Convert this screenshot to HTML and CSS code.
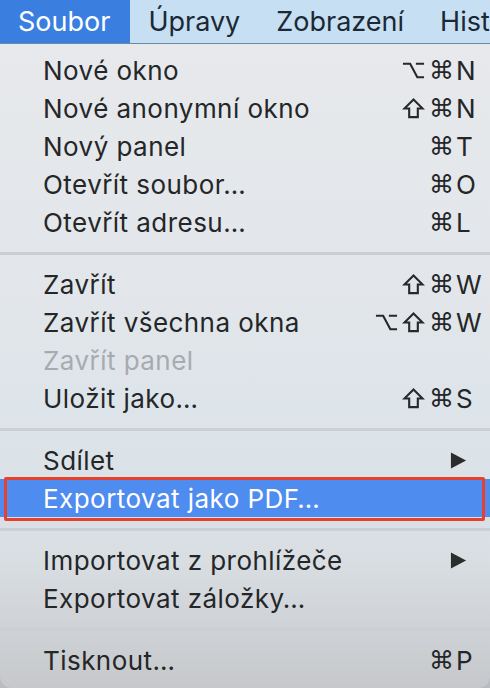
FILE: index.html
```html
<!DOCTYPE html>
<html lang="cs">
<head>
<meta charset="utf-8">
<link rel="stylesheet" href="styles.css">
</head>
<body>
<div class="screen">
  <div class="menubar">
    <div class="mb-item active">Soubor</div>
    <div class="mb-item">Úpravy</div>
    <div class="mb-item">Zobrazení</div>
    <div class="mb-item">Hist</div>
  </div>
  <div class="menu">
    <div class="row"><span class="label">Nové okno</span><span class="sc"><span class="mods"><svg class="ic" viewBox="0 0 24 24"><path d="M1 5H8.5L16 19H23M14.5 5H23"/></svg><span class="cmd">⌘</span></span><span class="key">N</span></span></div>
    <div class="row"><span class="label">Nové anonymní okno</span><span class="sc"><span class="mods"><svg class="ic" viewBox="0 0 24 24"><path d="M12 2.5L21.5 12H16.5V21H7.5V12H2.5Z"/></svg><span class="cmd">⌘</span></span><span class="key">N</span></span></div>
    <div class="row"><span class="label">Nový panel</span><span class="sc"><span class="mods"><span class="cmd">⌘</span></span><span class="key">T</span></span></div>
    <div class="row"><span class="label">Otevřít soubor…</span><span class="sc"><span class="mods"><span class="cmd">⌘</span></span><span class="key">O</span></span></div>
    <div class="row"><span class="label">Otevřít adresu…</span><span class="sc"><span class="mods"><span class="cmd">⌘</span></span><span class="key">L</span></span></div>
    <div class="sep"></div>
    <div class="row"><span class="label">Zavřít</span><span class="sc"><span class="mods"><svg class="ic" viewBox="0 0 24 24"><path d="M12 2.5L21.5 12H16.5V21H7.5V12H2.5Z"/></svg><span class="cmd">⌘</span></span><span class="key">W</span></span></div>
    <div class="row"><span class="label">Zavřít všechna okna</span><span class="sc"><span class="mods"><svg class="ic" viewBox="0 0 24 24"><path d="M1 5H8.5L16 19H23M14.5 5H23"/></svg><svg class="ic" viewBox="0 0 24 24"><path d="M12 2.5L21.5 12H16.5V21H7.5V12H2.5Z"/></svg><span class="cmd">⌘</span></span><span class="key">W</span></span></div>
    <div class="row disabled"><span class="label">Zavřít panel</span></div>
    <div class="row"><span class="label">Uložit jako…</span><span class="sc"><span class="mods"><svg class="ic" viewBox="0 0 24 24"><path d="M12 2.5L21.5 12H16.5V21H7.5V12H2.5Z"/></svg><span class="cmd">⌘</span></span><span class="key">S</span></span></div>
    <div class="sep"></div>
    <div class="row"><span class="label">Sdílet</span><svg class="arrow" viewBox="0 0 18 18"><path d="M1 0.5L17 9L1 17.5Z"/></svg></div>
    <div class="row selected"><span class="label">Exportovat jako PDF…</span></div>
    <div class="sep"></div>
    <div class="row"><span class="label">Importovat z prohlížeče</span><svg class="arrow" viewBox="0 0 18 18"><path d="M1 0.5L17 9L1 17.5Z"/></svg></div>
    <div class="row"><span class="label">Exportovat záložky…</span></div>
    <div class="sep"></div>
    <div class="row"><span class="label">Tisknout…</span><span class="sc"><span class="mods"><span class="cmd">⌘</span></span><span class="key">P</span></span></div>
  </div>
</div>
</body>
</html>
```

FILE: styles.css
```css
* { box-sizing: border-box; }
html, body {
  margin: 0;
  padding: 0;
  width: 490px;
  height: 688px;
  overflow: hidden;
  background: #b9bcc0;
}
.screen {
  width: 490px;
  height: 688px;
  display: flex;
  flex-direction: column;
  font-family: Inter, "Noto Sans", "DejaVu Sans", sans-serif;
}
.menubar {
  height: 44px;
  background: #c7dff2;
  border-bottom: 1px solid #6d8aa3;
  display: flex;
  align-items: stretch;
  white-space: nowrap;
  overflow: hidden;
  flex-shrink: 0;
}
.mb-item {
  font-size: 27px;
  color: #1b2836;
  padding: 0 18px 0 18px;
  display: flex;
  align-items: center;
  line-height: 1;
}
.mb-item.active {
  background: #3a7fe0;
  color: #ffffff;
  padding: 0 20px 0 18px;
}
.menu {
  flex: 1;
  padding-top: 7px;
  background: linear-gradient(180deg, #e7e9ec 0%, #e2e6ea 40%, #dce4ea 60%, #d9dee3 80%, #c6c8cb 100%);
  border-radius: 0 0 12px 12px;
  display: flex;
  flex-direction: column;
}
.row {
  height: 38px;
  display: flex;
  align-items: center;
  padding-left: 43px;
  font-size: 26px;
  color: #242628;
  position: relative;
  white-space: nowrap;
}
.label { flex: 1; letter-spacing: 0.45px; }
.sc {
  display: flex;
  align-items: center;
}
.mods {
  display: flex;
  align-items: center;
  gap: 4px;
}
.ic {
  width: 23px;
  height: 23px;
  fill: none;
  stroke: #26282a;
  stroke-width: 2.2;
  stroke-linejoin: miter;
}
.cmd {
  font-family: "DejaVu Sans", sans-serif;
  font-size: 25px;
  line-height: 1;
  width: 24px;
  text-align: center;
}
.key {
  width: 37px;
  padding-left: 3px;
  text-align: left;
}
.arrow {
  width: 17px;
  height: 17px;
  margin-right: 23px;
  fill: #2a2c2e;
}
.disabled { color: #a8abae; }
.selected {
  background: #4f8cf0;
  color: #ffffff;
}
.selected::after {
  content: "";
  position: absolute;
  left: 4px;
  right: 5px;
  top: -2px;
  bottom: -4px;
  border: 3px solid #e5412c;
  border-radius: 2px;
}
.sep {
  height: 24px;
  display: flex;
  align-items: center;
}
.sep::before {
  content: "";
  display: block;
  width: 100%;
  height: 3px;
  background: #cbced2;
}
```
